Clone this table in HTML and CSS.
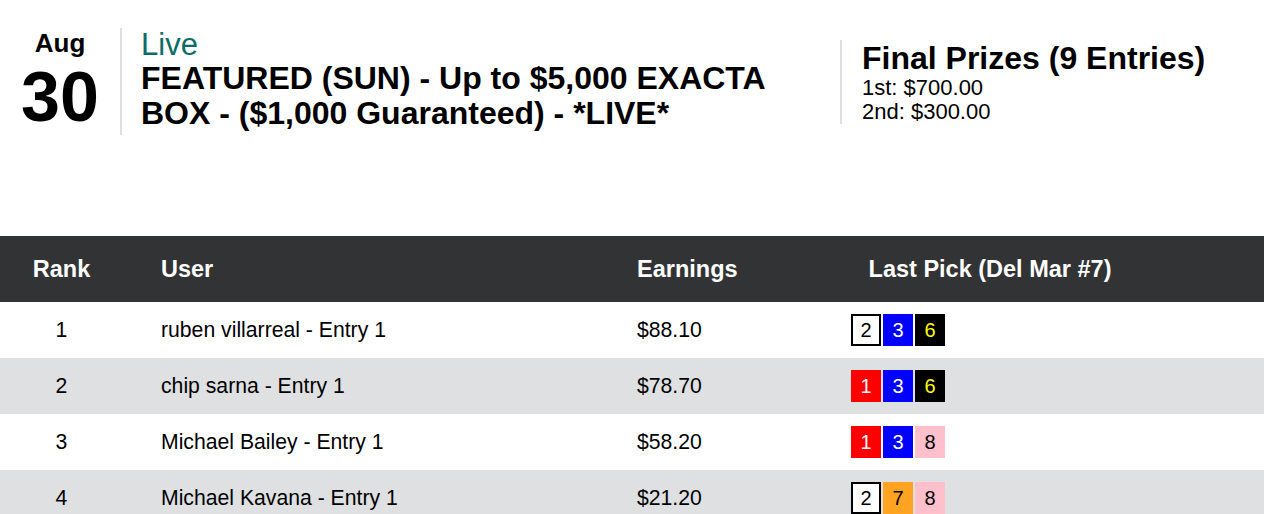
FILE: index.html
```html
<!DOCTYPE html>
<html lang="en">
<head>
<meta charset="utf-8">
<title>Leaderboard</title>
<link rel="stylesheet" href="styles.css">
</head>
<body>
<header class="contest-header">
  <div class="date">
    <div class="date-month">Aug</div>
    <div class="date-day">30</div>
  </div>
  <div class="contest-info">
    <div class="status">Live</div>
    <h1 class="contest-title">FEATURED (SUN) - Up to $5,000 EXACTA BOX - ($1,000 Guaranteed) - *LIVE*</h1>
  </div>
  <div class="prizes">
    <h2 class="prizes-title">Final Prizes (9 Entries)</h2>
    <div class="prize-line">1st: $700.00</div>
    <div class="prize-line">2nd: $300.00</div>
  </div>
</header>

<section class="board">
  <div class="row head">
    <div class="cell rank">Rank</div>
    <div class="cell user">User</div>
    <div class="cell earn">Earnings</div>
    <div class="cell pick-head">Last Pick (Del Mar #7)</div>
  </div>
  <div class="row">
    <div class="cell rank">1</div>
    <div class="cell user">ruben villarreal - Entry 1</div>
    <div class="cell earn">$88.10</div>
    <div class="cell picks"><span class="pp p2">2</span><span class="pp p3">3</span><span class="pp p6">6</span></div>
  </div>
  <div class="row alt">
    <div class="cell rank">2</div>
    <div class="cell user">chip sarna - Entry 1</div>
    <div class="cell earn">$78.70</div>
    <div class="cell picks"><span class="pp p1">1</span><span class="pp p3">3</span><span class="pp p6">6</span></div>
  </div>
  <div class="row">
    <div class="cell rank">3</div>
    <div class="cell user">Michael Bailey - Entry 1</div>
    <div class="cell earn">$58.20</div>
    <div class="cell picks"><span class="pp p1">1</span><span class="pp p3">3</span><span class="pp p8">8</span></div>
  </div>
  <div class="row alt">
    <div class="cell rank">4</div>
    <div class="cell user">Michael Kavana - Entry 1</div>
    <div class="cell earn">$21.20</div>
    <div class="cell picks"><span class="pp p2">2</span><span class="pp p7">7</span><span class="pp p8">8</span></div>
  </div>
</section>
</body>
</html>
```

FILE: styles.css
```css
* { box-sizing: border-box; }

body {
  margin: 0;
  font-family: "Liberation Sans", Arial, sans-serif;
  color: #000;
  background: #fff;
}

.contest-header {
  display: flex;
  align-items: center;
  padding-top: 28px;
}

.date {
  width: 120px;
  text-align: center;
  font-weight: bold;
  padding-bottom: 3px;
}

.date-month {
  font-size: 26px;
  line-height: 30px;
  margin-bottom: 4px;
}

.date-day {
  font-size: 70px;
  line-height: 70px;
}

.contest-info {
  flex: 1;
  border-left: 2px solid #e0e0e0;
  padding-left: 19px;
  padding-bottom: 4px;
}

.status {
  color: #0b6c69;
  font-size: 31px;
  line-height: 33px;
}

.contest-title {
  margin: 0;
  font-size: 32px;
  line-height: 35px;
  font-weight: bold;
  max-width: 670px;
}

.prizes {
  width: 424px;
  border-left: 2px solid #e0e0e0;
  padding-left: 20px;
}

.prizes-title {
  margin: 0;
  font-size: 32px;
  line-height: 36px;
  font-weight: bold;
}

.prize-line {
  font-size: 22px;
  line-height: 24px;
}

.board {
  margin-top: 101px;
}

.row {
  display: grid;
  grid-template-columns: 123px 476px 238px 306px 1fr;
  height: 56px;
  align-items: center;
  font-size: 21.2px;
  background: #fff;
}

.row.alt {
  background: #dfe0e2;
}

.row.head {
  height: 66px;
  background: #323335;
  color: #fff;
  font-weight: bold;
  font-size: 23.5px;
}

.cell.rank {
  text-align: center;
}

.cell.user,
.cell.earn {
  padding-left: 38px;
}

.cell.pick-head {
  text-align: center;
}

.cell.picks {
  display: flex;
  gap: 2px;
  padding-left: 14px;
}

.pp {
  width: 30px;
  height: 32px;
  display: flex;
  align-items: center;
  justify-content: center;
  font-size: 20px;
}

.p1 { background: #ff0000; color: #fff; }
.p2 { background: #fff; color: #000; border: 2px solid #000; }
.p3 { background: #0000ff; color: #fff; }
.p6 { background: #000; color: #ffff00; }
.p7 { background: #ffa422; color: #000; }
.p8 { background: #ffc0cb; color: #000; }
```
